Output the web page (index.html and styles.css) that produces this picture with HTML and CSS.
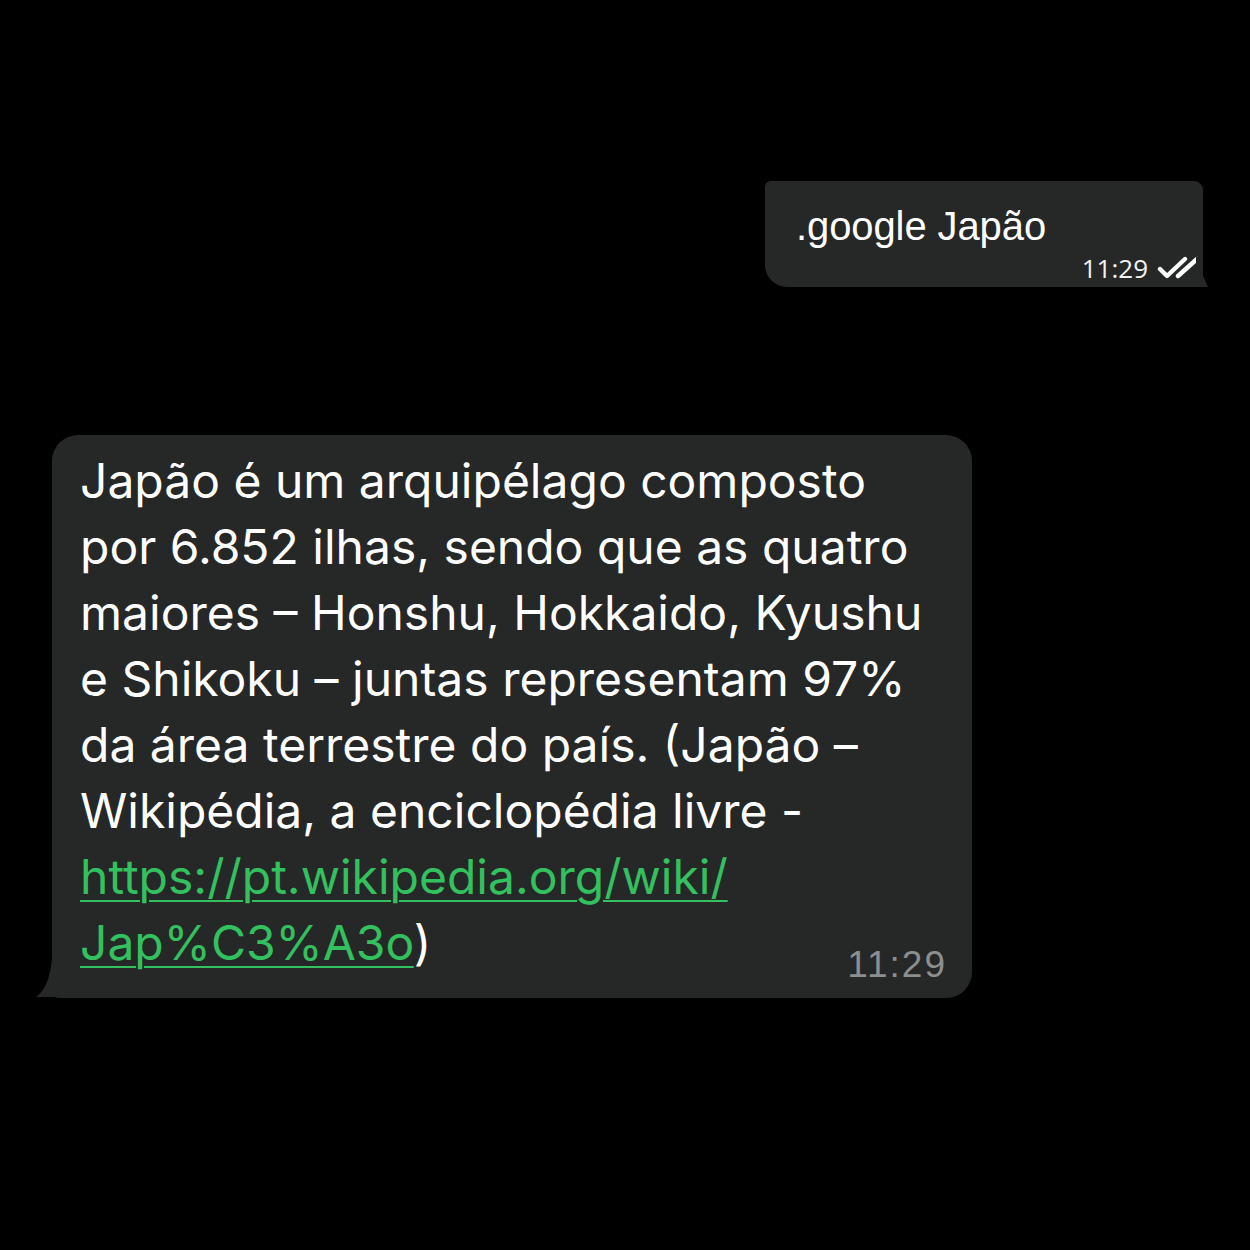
FILE: index.html
```html
<!DOCTYPE html>
<html lang="pt">
<head>
<meta charset="utf-8">
<link rel="stylesheet" href="styles.css">
</head>
<body>
<div class="chat">
  <div class="row row-out">
    <div class="bubble bubble-out">
      <div class="out-text">.google Japão</div>
      <div class="out-meta">
        <span class="out-time">11:29</span>
        <svg class="ticks" width="46" height="26" viewBox="0 0 46 26" fill="none" stroke="#ffffff" stroke-width="4.4" stroke-linecap="round" stroke-linejoin="round">
          <path d="M3 13 L10 20 L28 3"/>
          <path d="M21 20 L40 3"/>
        </svg>
      </div>
    </div>
  </div>
  <div class="row row-in">
    <div class="bubble bubble-in">
      <div class="msg">
        <div class="line">Japão é um arquipélago composto</div>
        <div class="line">por 6.852 ilhas, sendo que as quatro</div>
        <div class="line">maiores – Honshu, Hokkaido, Kyushu</div>
        <div class="line">e Shikoku – juntas representam 97%</div>
        <div class="line">da área terrestre do país. (Japão –</div>
        <div class="line">Wikipédia, a enciclopédia livre -</div>
        <div class="line"><a class="link" href="#">https://pt.wikipedia.org/wiki/</a></div>
        <div class="line last"><span><a class="link" href="#">Jap%C3%A3o</a>)</span><span class="in-time">11:29</span></div>
      </div>
    </div>
  </div>
</div>
</body>
</html>
```
FILE: styles.css
```css
html, body {
  margin: 0;
  padding: 0;
  background: #000000;
}
body {
  width: 1250px;
  height: 1250px;
  overflow: hidden;
  font-family: "Liberation Sans", Arial, sans-serif;
  color: #ffffff;
}
.chat {
  display: flex;
  flex-direction: column;
  padding-top: 181px;
}
.row {
  display: flex;
}
.row-out {
  justify-content: flex-end;
  padding-right: 47px;
}
.row-in {
  margin-top: 148px;
  padding-left: 52px;
}
.bubble {
  position: relative;
  background: #262727;
}
.bubble-out {
  width: 438px;
  height: 106px;
  box-sizing: border-box;
  border-radius: 6px 9px 0 22px;
  padding: 22px 0 0 31px;
}
.bubble-out::after {
  content: "";
  position: absolute;
  right: -5px;
  bottom: 0;
  width: 12px;
  height: 30px;
  background: #262727;
  clip-path: polygon(0 0, 45% 0, 55% 60%, 100% 100%, 0 100%);
}
.out-text {
  font-size: 40px;
  line-height: 46px;
  letter-spacing: -0.1px;
}
.out-meta {
  display: flex;
  justify-content: flex-end;
  align-items: center;
  margin-top: 4px;
  padding-right: 0;
}
.out-time {
  font-family: "Open Sans", sans-serif;
  font-size: 26px;
  line-height: 30px;
  color: #f2f2f2;
}
.ticks {
  margin-left: 9px;
  margin-top: 2px;
}
.bubble-in {
  width: 920px;
  height: 563px;
  box-sizing: border-box;
  border-radius: 26px 26px 26px 6px;
  padding: 13px 28px 0 28px;
}
.bubble-in::before {
  content: "";
  position: absolute;
  left: -16px;
  bottom: 1px;
  width: 40px;
  height: 40px;
  background: #262727;
  clip-path: path("M 16 0 L 40 0 L 40 40 L 0 40 Q 14 30 16 0 Z");
}
.msg {
  font-family: Inter, "Liberation Sans", sans-serif;
  font-size: 48px;
  line-height: 66px;
  white-space: nowrap;
}
.line {
  height: 66px;
}
.last {
  display: flex;
  justify-content: space-between;
  align-items: baseline;
}
.link {
  color: #33c05f;
  text-decoration: underline;
  text-decoration-thickness: 2px;
  text-underline-offset: 6px;
}
.in-time {
  font-family: "Liberation Sans", sans-serif;
  font-size: 37px;
  color: #8d8e8e;
  letter-spacing: 2px;
  position: relative;
  top: 17px;
  right: -3px;
}
```
